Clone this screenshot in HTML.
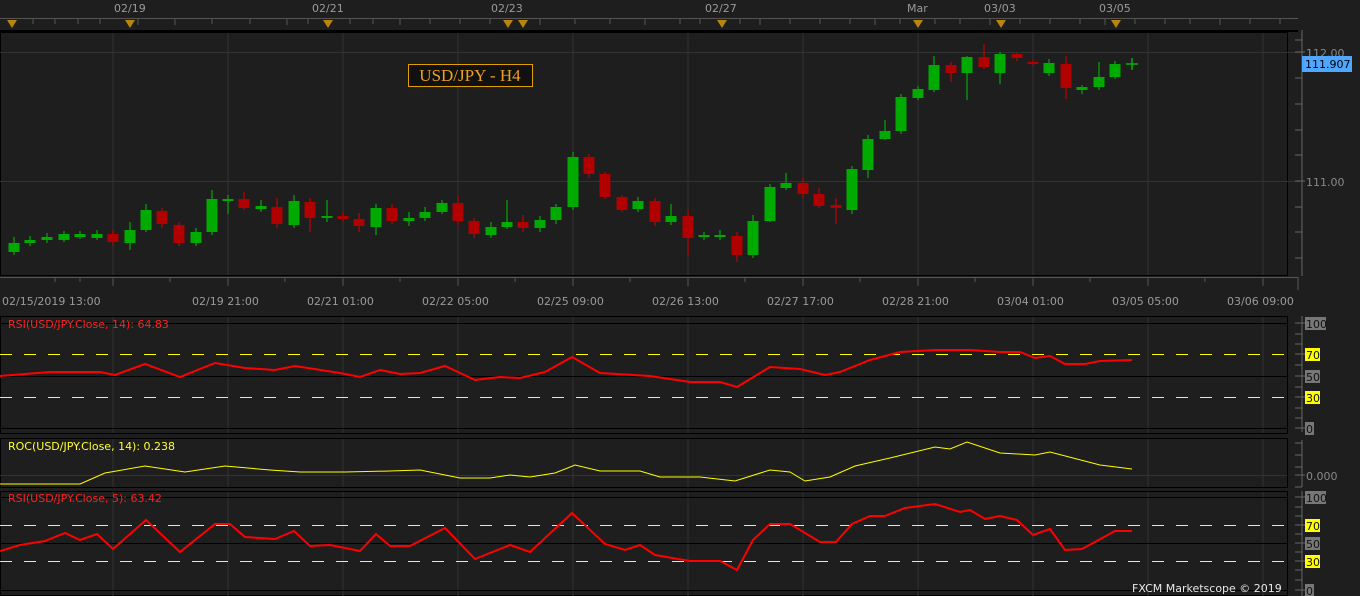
<!DOCTYPE html>
<html><head><meta charset="utf-8"><style>
html,body{margin:0;padding:0;background:#1e1e1e;width:1360px;height:596px;overflow:hidden}
svg{display:block;font-family:"DejaVu Sans","Liberation Sans",sans-serif}
</style></head><body>
<svg width="1360" height="596" xmlns="http://www.w3.org/2000/svg">
<rect width="1360" height="596" fill="#1e1e1e"/>
<g fill="#9a9a9a" font-size="11">
<text x="114" y="12">02/19</text><text x="312" y="12">02/21</text><text x="491" y="12">02/23</text><text x="705" y="12">02/27</text><text x="907" y="12">Mar</text><text x="984" y="12">03/03</text><text x="1099" y="12">03/05</text>
</g>
<line x1="0" y1="18.5" x2="1298" y2="18.5" stroke="#555"/>
<g stroke="#555"><path d="M33 19v5M55 19v5M78 19v5M100 19v5M138 19v6M175 19v6M212 19v5M250 19v5M287 19v6M308 19v5M350 19v5M373 19v5M400 19v6M430 19v5M460 19v5M490 19v5M540 19v6M575 19v5M610 19v5M645 19v6M680 19v5M700 19v5M740 19v5M760 19v6M790 19v5M820 19v5M850 19v5M875 19v6M900 19v5M935 19v5M960 19v5M990 19v6M1020 19v5M1050 19v5M1080 19v5M1105 19v6M1135 19v5M1165 19v5M1190 19v5M1220 19v6M1250 19v5M1280 19v5"/></g>
<line x1="0" y1="31" x2="1298" y2="31" stroke="#000" stroke-width="2"/>
<g fill="#b8860b">
<path d="M7 20h10l-5 8z M125 20h10l-5 8z M323 20h10l-5 8z M503 20h10l-5 8z M518 20h10l-5 8z M717 20h10l-5 8z M913 20h10l-5 8z M996 20h10l-5 8z M1111 20h10l-5 8z"/>
</g>
<rect x="0.5" y="32.5" width="1287" height="243" fill="#1e1e1e" stroke="#000"/>
<g stroke="#333">
<path d="M113 33V275M228 33V275M343 33V275M458 33V275M573 33V275M688 33V275M803 33V275M918 33V275M1033 33V275M1148 33V275M1263 33V275"/>
<path d="M0 52.5H1300M0 181.5H1300"/>
</g>
<rect x="408.5" y="64.5" width="124" height="22" fill="#111" stroke="#e0a000"/>
<text x="470" y="81" text-anchor="middle" fill="#f0a020" font-family="Liberation Serif,serif" font-size="17">USD/JPY - H4</text>
<g stroke-width="1.2">
<path stroke="#00aa00" d="M14 237V255M30 236V246M47 233V243M64 231V242M80 231V239M97 230V240M130 222V250M146 204V232M196 228V246M212 190V235M228 195V214M261 200V212M294 195V228M327 200V222M376 204V235M409 212V226M425 207V221M442 200V214M491 222V238M507 200V229M540 216V232M556 204V224M573 152V210M638 197V212M671 204V225M704 232V240M720 230V240M753 215V258M770 184V222M786 173V190M852 166V214M868 135V178M885 120V140M901 94V134M918 86V100M934 56V92M967 56V100M1000 52V84M1049 59V76M1082 85V94M1099 62V90M1115 61V79"/>
<path stroke="#c00000" d="M113 230V246M162 208V228M179 222V246M244 192V210M277 198V228M310 198V232M343 212V222M359 213V232M392 204V224M458 196V225M474 218V238M523 215V232M589 154V178M605 172V199M622 195V212M655 198V226M688 210V256M737 232V262M803 178V198M819 188V208M836 198V224M951 62V82M984 44V69M1017 53V61M1033 59V66M1066 56V99"/>
<path stroke="#00cc00" d="M1126 64H1138M1132 58V70"/>
</g>
<g fill="#00aa00">
<rect x="8.5" y="243" width="11" height="9"/><rect x="24.5" y="240" width="11" height="3"/><rect x="41.5" y="237" width="11" height="3"/><rect x="58.5" y="234" width="11" height="6"/><rect x="74.5" y="234" width="11" height="3"/><rect x="91.5" y="234" width="11" height="4"/><rect x="124.5" y="230" width="11" height="13"/><rect x="140.5" y="210" width="11" height="20"/><rect x="190.5" y="232" width="11" height="11"/><rect x="206.5" y="199" width="11" height="33"/><rect x="222.5" y="199" width="11" height="2"/><rect x="255.5" y="206" width="11" height="3"/><rect x="288.5" y="201" width="11" height="24"/><rect x="321.5" y="216" width="11" height="2"/><rect x="370.5" y="208" width="11" height="19"/><rect x="403.5" y="218" width="11" height="3"/><rect x="419.5" y="212" width="11" height="6"/><rect x="436.5" y="203" width="11" height="9"/><rect x="485.5" y="227" width="11" height="8"/><rect x="501.5" y="222" width="11" height="5"/><rect x="534.5" y="220" width="11" height="8"/><rect x="550.5" y="207" width="11" height="13"/><rect x="567.5" y="157" width="11" height="50"/><rect x="632.5" y="201" width="11" height="8"/><rect x="665.5" y="216" width="11" height="6"/><rect x="698.5" y="235" width="11" height="2"/><rect x="714.5" y="235" width="11" height="2"/><rect x="747.5" y="221" width="11" height="34"/><rect x="764.5" y="187" width="11" height="34"/><rect x="780.5" y="183" width="11" height="5"/><rect x="846.5" y="169" width="11" height="41"/><rect x="862.5" y="139" width="11" height="31"/><rect x="879.5" y="131" width="11" height="8"/><rect x="895.5" y="97" width="11" height="34"/><rect x="912.5" y="89" width="11" height="9"/><rect x="928.5" y="65" width="11" height="25"/><rect x="961.5" y="57" width="11" height="16"/><rect x="994.5" y="54" width="11" height="19"/><rect x="1043.5" y="63" width="11" height="10"/><rect x="1076.5" y="87" width="11" height="3"/><rect x="1093.5" y="77" width="11" height="10"/><rect x="1109.5" y="64" width="11" height="13"/>
</g>
<g fill="#b00000">
<rect x="107.5" y="234" width="11" height="8"/><rect x="156.5" y="211" width="11" height="13"/><rect x="173.5" y="225" width="11" height="18"/><rect x="238.5" y="199" width="11" height="9"/><rect x="271.5" y="207" width="11" height="17"/><rect x="304.5" y="202" width="11" height="16"/><rect x="337.5" y="216" width="11" height="3"/><rect x="353.5" y="219" width="11" height="7"/><rect x="386.5" y="208" width="11" height="13"/><rect x="452.5" y="203" width="11" height="18"/><rect x="468.5" y="221" width="11" height="13"/><rect x="517.5" y="222" width="11" height="6"/><rect x="583.5" y="157" width="11" height="17"/><rect x="599.5" y="174" width="11" height="23"/><rect x="616.5" y="197" width="11" height="13"/><rect x="649.5" y="201" width="11" height="21"/><rect x="682.5" y="216" width="11" height="22"/><rect x="731.5" y="236" width="11" height="19"/><rect x="797.5" y="183" width="11" height="11"/><rect x="813.5" y="194" width="11" height="12"/><rect x="830.5" y="205" width="11" height="3"/><rect x="945.5" y="65" width="11" height="8"/><rect x="978.5" y="57" width="11" height="10"/><rect x="1011.5" y="54" width="11" height="4"/><rect x="1027.5" y="62" width="11" height="2"/><rect x="1060.5" y="64" width="11" height="24"/>
</g>
<g stroke="#666"><path d="M1302 30V276M1295 40h7M1295 52h10M1295 78h7M1295 104h7M1295 130h7M1295 155h7M1295 181h10M1295 207h7M1295 232h7M1295 258h7"/></g>
<text x="1306" y="57" fill="#888" font-size="11">112.00</text>
<text x="1306" y="186" fill="#888" font-size="11">111.00</text>
<rect x="1302" y="56" width="50" height="16" fill="#4da6ff"/>
<text x="1305" y="68" fill="#000" font-size="11">111.907</text>
<path d="M0 277.5H1298M1298 277V290" stroke="#555"/>
<g stroke="#555"><path d="M113 278v8M228 278v8M343 278v8M458 278v8M573 278v8M688 278v8M803 278v8M918 278v8M1033 278v8M1148 278v8M1263 278v8M55 278v4M80 278v4M170 278v4M285 278v4M400 278v4M515 278v4M630 278v4M745 278v4M860 278v4M975 278v4M1090 278v4M1205 278v4"/></g>
<g fill="#9a9a9a" font-size="11">
<text x="2" y="305">02/15/2019 13:00</text><text x="192" y="305">02/19 21:00</text><text x="307" y="305">02/21 01:00</text><text x="422" y="305">02/22 05:00</text><text x="537" y="305">02/25 09:00</text><text x="652" y="305">02/26 13:00</text><text x="767" y="305">02/27 17:00</text><text x="882" y="305">02/28 21:00</text><text x="997" y="305">03/04 01:00</text><text x="1112" y="305">03/05 05:00</text><text x="1227" y="305">03/06 09:00</text>
</g>
<rect x="0.5" y="316.5" width="1287" height="117" fill="none" stroke="#000"/>
<g stroke="#333"><path d="M113 317V433M228 317V433M343 317V433M458 317V433M573 317V433M688 317V433M803 317V433M918 317V433M1033 317V433M1148 317V433M1263 317V433"/></g>
<path d="M0 323.5H1287M0 376.5H1287M0 428.5H1287" stroke="#000"/>
<path d="M0 354.5H1287M0 397.5H1287" stroke="#ffff00" stroke-dasharray="12,12"/>
<polyline fill="none" stroke="#ff0000" stroke-width="2" points="0,376 50,372 100,372 115,375 145,364 180,377 215,363 245,368 275,370 295,366 340,373 360,377 380,370 400,374 420,373 445,366 475,380 500,377 520,378 545,372 572,357 600,373 650,376 690,382 720,382 737,387 770,367 800,369 825,375 840,372 870,360 900,352 935,350 970,350 1000,352 1020,352 1035,358 1050,356 1065,364 1085,364 1100,361 1132,360"/>
<text x="8" y="328" fill="#ff2020" font-size="11">RSI(USD/JPY.Close, 14): 64.83</text>
<g stroke="#666"><path d="M1302 316V432M1295 323h10M1295 334h7M1295 344h7M1295 354h10M1295 365h7M1295 376h10M1295 387h7M1295 397h10M1295 408h7M1295 418h7M1295 428h10"/></g>
<rect x="1305" y="317" width="21" height="13" fill="#777"/><text x="1306" y="328" fill="#111" font-size="11">100</text>
<rect x="1305" y="348" width="15" height="13" fill="#ffff00"/><text x="1306" y="359" fill="#111" font-size="11">70</text>
<rect x="1305" y="370" width="15" height="13" fill="#777"/><text x="1306" y="381" fill="#111" font-size="11">50</text>
<rect x="1305" y="391" width="15" height="13" fill="#ffff00"/><text x="1306" y="402" fill="#111" font-size="11">30</text>
<rect x="1305" y="422" width="9" height="13" fill="#777"/><text x="1306" y="433" fill="#111" font-size="11">0</text>
<rect x="0.5" y="438.5" width="1287" height="49" fill="none" stroke="#000"/>
<g stroke="#333"><path d="M113 439V487M228 439V487M343 439V487M458 439V487M573 439V487M688 439V487M803 439V487M918 439V487M1033 439V487M1148 439V487M1263 439V487M0 475.5H1287"/></g>
<polyline fill="none" stroke="#ffff00" stroke-width="1" points="0,484 80,484 105,473 145,466 185,472 225,466 270,470 300,472 345,472 390,471 420,470 460,478 490,478 510,475 530,477 555,473 575,465 600,471 640,471 660,477 700,477 735,481 770,470 790,472 805,481 830,477 855,466 890,458 935,447 950,449 967,442 1000,453 1035,455 1050,452 1100,465 1132,469"/>
<text x="8" y="450" fill="#ffff30" font-size="11">ROC(USD/JPY.Close, 14): 0.238</text>
<g stroke="#666"><path d="M1302 440V487M1295 443h7M1295 455h7M1295 467h7M1295 475h10M1295 487h7"/></g>
<text x="1306" y="480" fill="#888" font-size="11">0.000</text>
<rect x="0.5" y="491.5" width="1287" height="104" fill="none" stroke="#000"/>
<g stroke="#333"><path d="M113 492V596M228 492V596M343 492V596M458 492V596M573 492V596M688 492V596M803 492V596M918 492V596M1033 492V596M1148 492V596M1263 492V596"/></g>
<path d="M0 497.5H1287M0 543.5H1287M0 590.5H1287" stroke="#000"/>
<path d="M0 525.5H1287M0 561.5H1287" stroke="#ffff00" stroke-dasharray="12,12"/>
<polyline fill="none" stroke="#ff0000" stroke-width="2" points="0,551 20,545 45,541 65,533 80,540 97,534 113,549 146,520 180,552 215,524 230,524 245,537 275,539 294,531 310,546 330,545 360,551 376,534 390,546 410,546 445,528 475,559 510,545 530,552 572,513 605,544 625,550 640,545 655,555 690,561 720,561 737,570 753,540 770,524 790,524 820,542 836,542 852,524 870,516 885,516 905,508 935,504 960,512 970,510 985,519 1000,516 1017,520 1033,535 1050,529 1065,550 1082,549 1115,531 1132,531"/>
<text x="8" y="502" fill="#ff2020" font-size="11">RSI(USD/JPY.Close, 5): 63.42</text>
<g stroke="#666"><path d="M1302 491V596M1295 497h10M1295 507h7M1295 516h7M1295 525h10M1295 534h7M1295 543h10M1295 552h7M1295 561h10M1295 570h7M1295 580h7M1295 590h10"/></g>
<rect x="1305" y="491" width="21" height="13" fill="#777"/><text x="1306" y="502" fill="#111" font-size="11">100</text>
<rect x="1305" y="519" width="15" height="13" fill="#ffff00"/><text x="1306" y="530" fill="#111" font-size="11">70</text>
<rect x="1305" y="537" width="15" height="13" fill="#777"/><text x="1306" y="548" fill="#111" font-size="11">50</text>
<rect x="1305" y="555" width="15" height="13" fill="#ffff00"/><text x="1306" y="566" fill="#111" font-size="11">30</text>
<rect x="1305" y="584" width="9" height="13" fill="#777"/><text x="1306" y="595" fill="#111" font-size="11">0</text>
<text x="1132" y="592" fill="#e8e8e8" font-size="11">FXCM Marketscope © 2019</text>
</svg>
</body></html>
